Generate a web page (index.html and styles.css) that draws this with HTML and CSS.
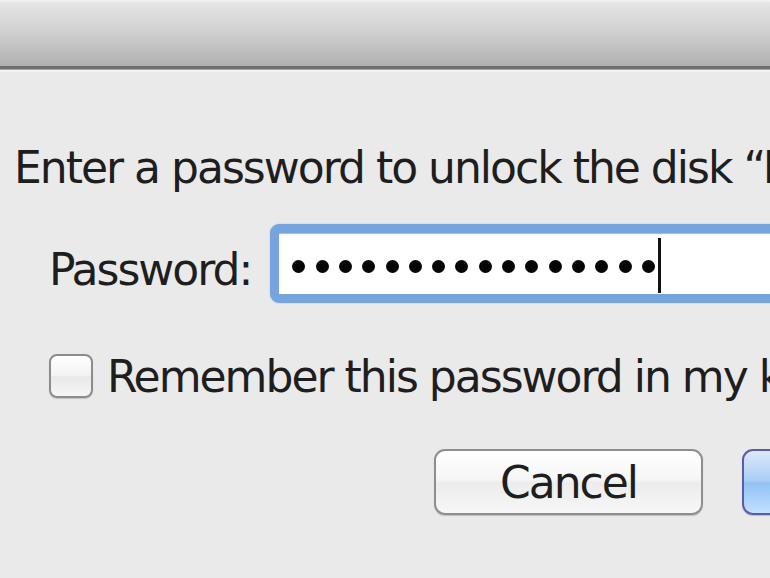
FILE: index.html
```html
<!DOCTYPE html>
<html lang="en">
<head>
    <meta charset="UTF-8">
    <meta name="viewport" content="width=device-width, initial-scale=1.0">
    <title>Unlock Disk</title>
    <link rel="stylesheet" href="styles.css">
</head>
<body>
    <div class="titlebar"></div>

    <div class="dialog">
        <p class="message">Enter a password to unlock the disk “Backup”</p>

        <div class="password-row">
            <label class="label" for="password">Password:</label>
            <div class="field" id="password">
                <div class="dots">
                    <span class="dot"></span><span class="dot"></span><span class="dot"></span><span class="dot"></span>
                    <span class="dot"></span><span class="dot"></span><span class="dot"></span><span class="dot"></span>
                    <span class="dot"></span><span class="dot"></span><span class="dot"></span><span class="dot"></span>
                    <span class="dot"></span><span class="dot"></span><span class="dot"></span><span class="dot"></span>
                </div>
                <span class="caret"></span>
            </div>
        </div>

        <div class="remember-row">
            <span class="checkbox"></span>
            <span class="remember-text">Remember this password in my keychain</span>
        </div>

        <div class="buttons">
            <button class="btn">Cancel</button>
            <button class="btn btn-default">Unlock</button>
        </div>
    </div>
</body>
</html>
```

FILE: styles.css
```css
html, body {
    margin: 0;
    padding: 0;
    overflow: hidden;
}
body {
    font-family: "DejaVu Sans", "Liberation Sans", sans-serif;
    background-color: #eaeaea;
    color: #1e1e1e;
    width: 770px;
    height: 578px;
}
.titlebar {
    height: 66px;
    background: linear-gradient(#f2f2f2 0, #e4e4e4 6%, #d2d2d2 45%, #b0b0b0 100%);
    border-bottom: 3px solid #6e6e6e;
    box-shadow: 0 1px 0 #a8a8a8, 0 3px 0 #f3f3f3;
}
.dialog {
    padding-top: 73px;
    white-space: nowrap;
    letter-spacing: -2px;
}
.message {
    margin: 0;
    padding-left: 14px;
    font-size: 44px;
    line-height: 52px;
}
.password-row {
    display: flex;
    align-items: flex-start;
    margin-top: 30px;
    padding-left: 49px;
}
.label {
    font-size: 44px;
    line-height: 52px;
    margin-top: 20px;
    margin-right: 19px;
}
.field {
    flex: none;
    width: 700px;
    height: 61px;
    background: #fff;
    border: 9px solid #75a5dc;
    border-radius: 9px;
    box-shadow: 0 0 2px #a9c6ea, inset 0 1px 1px #9fb7d2;
    display: flex;
    align-items: flex-start;
    padding-left: 13px;
}
.dots {
    display: flex;
    gap: 10.3px;
    margin-top: 27px;
}
.dot {
    width: 13px;
    height: 13px;
    border-radius: 50%;
    background: #050505;
}
.caret {
    width: 3px;
    height: 55px;
    margin-top: 5px;
    margin-left: 3px;
    background: #111;
}
.remember-row {
    display: flex;
    align-items: flex-start;
    margin-top: 48px;
    padding-left: 49px;
}
.checkbox {
    flex: none;
    width: 40px;
    height: 40px;
    margin-top: 3px;
    margin-right: 14px;
    border: 2px solid #8c8c8c;
    border-radius: 8px;
    background: linear-gradient(#ffffff, #f2f2f2 50%, #e8e8e8 52%, #f6f6f6);
    box-shadow: 0 1px 1px #c4c4c4;
}
.remember-text {
    font-size: 44px;
    line-height: 52px;
}
.buttons {
    display: flex;
    gap: 39px;
    margin-top: 46px;
    padding-left: 434px;
}
.btn {
    flex: none;
    width: 269px;
    height: 66px;
    font-family: inherit;
    font-size: 44px;
    letter-spacing: -2px;
    color: #1e1e1e;
    border: 2px solid #8e8e8e;
    border-radius: 11px;
    background: linear-gradient(#ffffff, #f6f6f6 45%, #ececec 52%, #f7f7f7);
    box-shadow: 0 1px 1px #bdbdbd;
    padding: 0;
}
.btn-default {
    border-color: #5b5ba6;
    background: linear-gradient(#dbe9fa, #aacdf4 48%, #92c2f4 52%, #c0e0ff);
}
```
